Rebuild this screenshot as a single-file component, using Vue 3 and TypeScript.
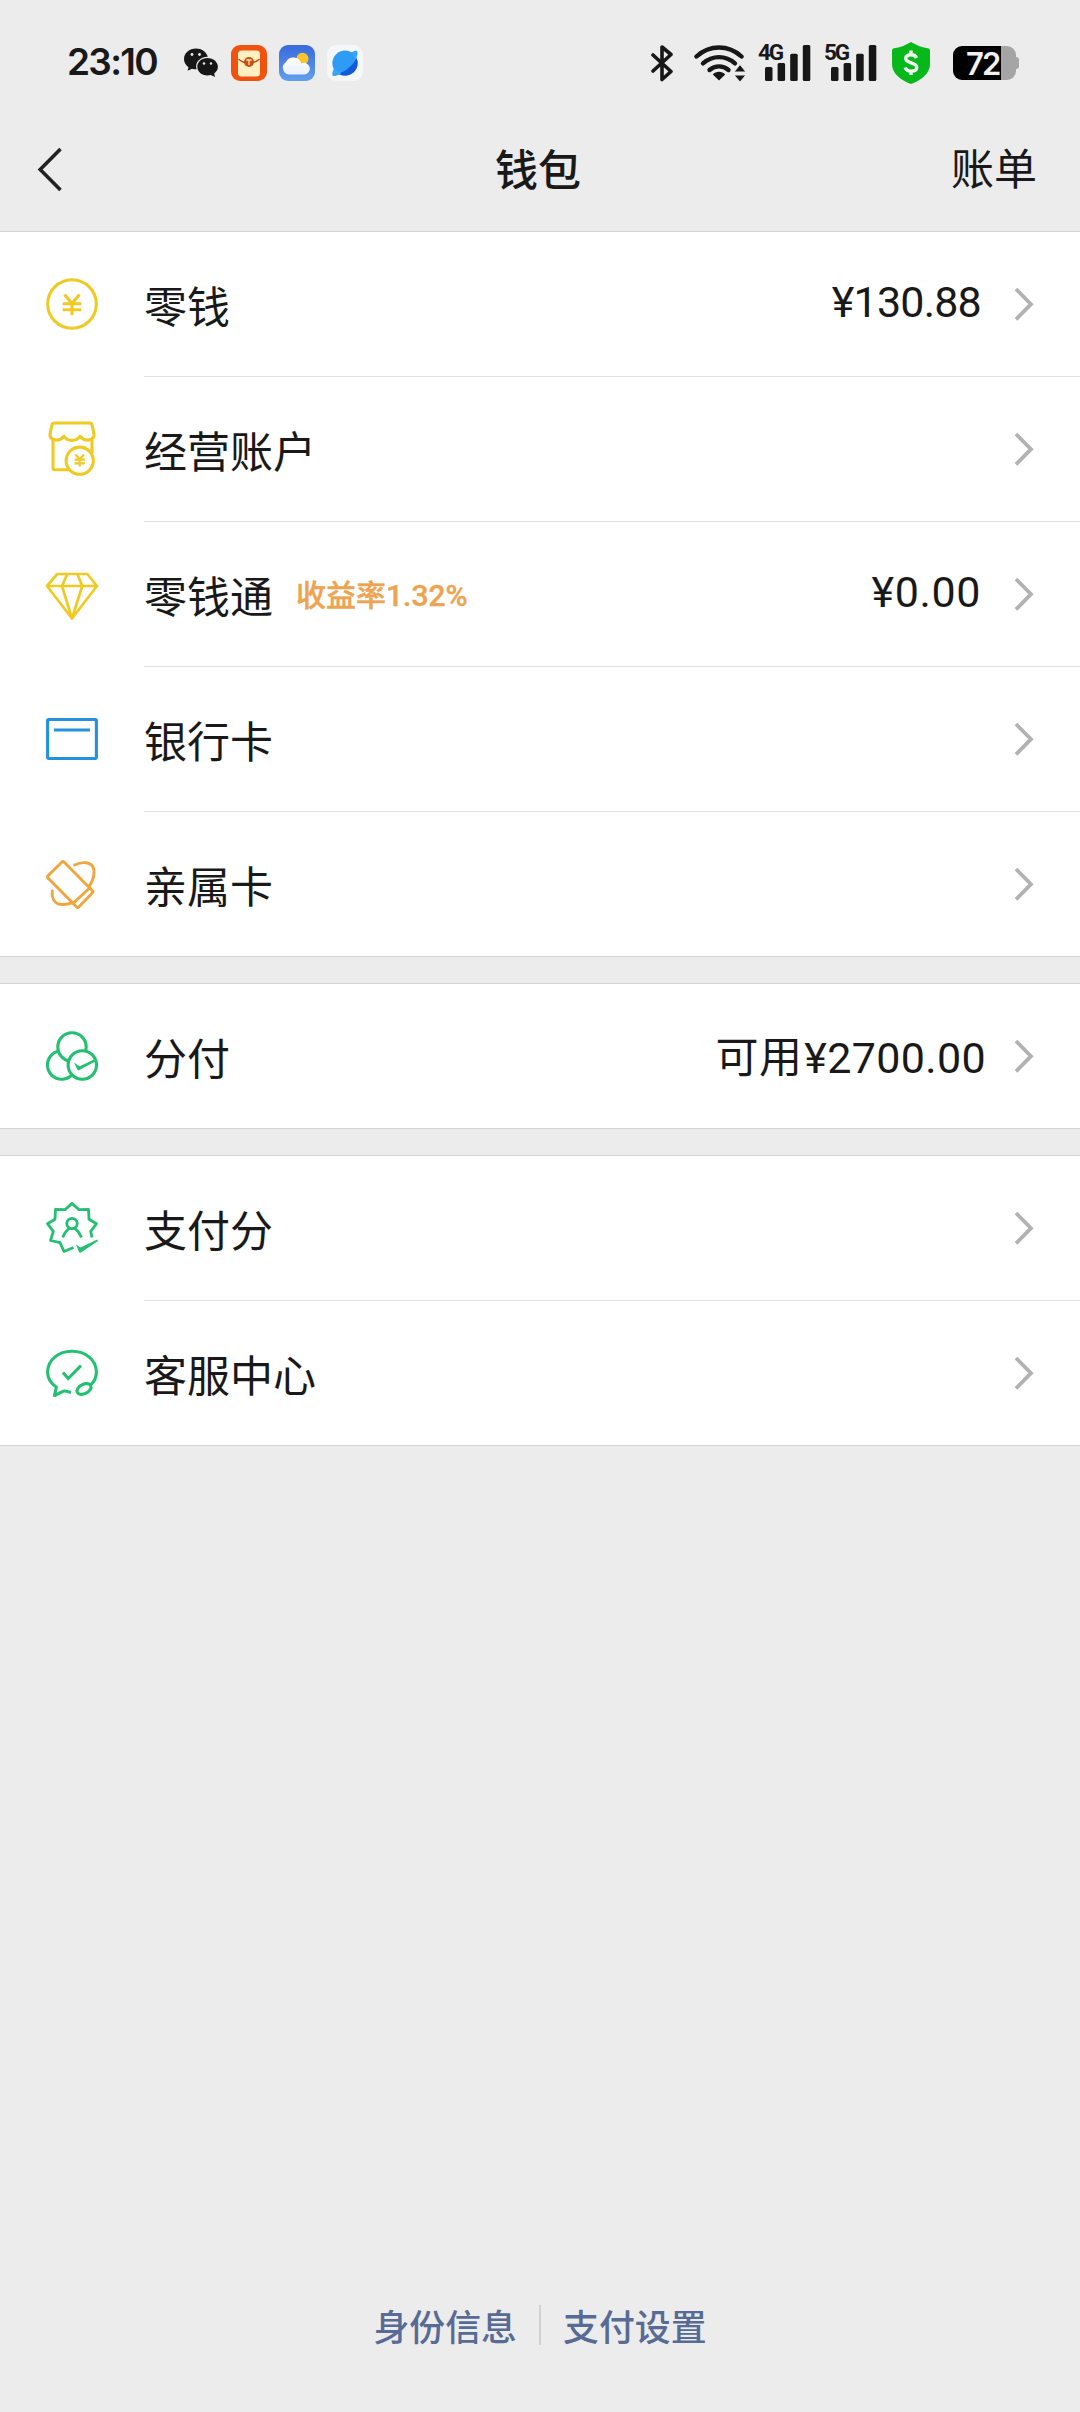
<script setup lang="ts">
type IconName = 'coin' | 'shop' | 'diamond' | 'card' | 'family' | 'circles' | 'score' | 'service'

interface Row {
  icon: IconName
  label: string
  badge?: string
  prefix?: string
  amount?: string
}

const groups: Row[][] = [
  [
    { icon: 'coin', label: '零钱', amount: '¥130.88' },
    { icon: 'shop', label: '经营账户' },
    { icon: 'diamond', label: '零钱通', badge: '收益率1.32%', amount: '¥0.00' },
    { icon: 'card', label: '银行卡' },
    { icon: 'family', label: '亲属卡' },
  ],
  [{ icon: 'circles', label: '分付', prefix: '可用', amount: '¥2700.00' }],
  [
    { icon: 'score', label: '支付分' },
    { icon: 'service', label: '客服中心' },
  ],
]

const networks: string[] = ['4G', '5G']
</script>

<template>
  <main class="page">
    <header class="status">
      <span class="clock">23:10</span>
      <div class="apps">
        <svg class="wechat" width="34" height="30" viewBox="0 0 34 30">
          <path fill="#171717" d="M12 .5C5.400.5 0 5 0 11c0 3.400 1.700 6.200 4.500 8.200L3.600 22.800 8 20.700c1.300.4 2.600.6 4 .6h.6C10.500 14.500 16 8.800 23.800 8.800 22.500 3.800 17.600.5 12 .5Z" />
          <path fill="#171717" d="M23.400 10C17.500 10 13.300 14 13.300 18.800s4.200 8.700 10.100 8.700c1.200 0 2.300-.2 3.400-.5l4.200 2-.8-3.500c2.300-1.600 3.700-3.900 3.700-6.700C33.900 14 29.300 10 23.400 10Z" />
          <g fill="#ececec"><circle cx="8" cy="6.500" r="1.400" /><circle cx="15.500" cy="6.500" r="1.400" /><circle cx="20" cy="15.500" r="1.200" /><circle cx="27" cy="15.500" r="1.200" /></g>
        </svg>
        <svg width="36" height="36" viewBox="0 0 36 36">
          <rect width="36" height="36" rx="9" fill="#f05310" />
          <rect x="7" y="5.500" width="22" height="26" rx="3.500" fill="#fff0c4" />
          <path d="M7.500 14c3 3 6.500 4 10.500 4s7.500-1 10.500-4" fill="none" stroke="#b8470e" stroke-width="1.200" />
          <circle cx="18" cy="17" r="5" fill="#c9500f" />
          <path d="M15.500 15h5M18 15v5" stroke="#ffe6ad" stroke-width="1.300" />
        </svg>
        <svg width="36" height="36" viewBox="0 0 36 36">
          <defs>
            <linearGradient id="sky" x1="0" y1="0" x2="0" y2="1"><stop offset="0" stop-color="#3869dc" /><stop offset="1" stop-color="#609fee" /></linearGradient>
            <linearGradient id="cloud" x1="0" y1="0" x2="0" y2="1"><stop offset="0" stop-color="#fff" /><stop offset="1" stop-color="#e8f0fd" /></linearGradient>
          </defs>
          <rect width="36" height="36" rx="9" fill="url(#sky)" />
          <circle cx="23.500" cy="13.800" r="6" fill="#fcc52c" />
          <path fill="url(#cloud)" d="M11.500 29.500A6.800 6.800 0 0 1 6.800 17.200 8.300 8.300 0 0 1 22.300 18.600 5.800 5.800 0 1 1 25 29.500Z" />
        </svg>
        <svg width="36" height="36" viewBox="0 0 36 36">
          <rect width="36" height="36" rx="9" fill="#f5f6f7" />
          <circle cx="18" cy="18.200" r="12.600" fill="#2e9cf5" />
          <path fill="#1559db" d="M29.500 13C25.500 21 18 27.500 10.500 28.300 18 33.500 30 29.500 30.600 18.500Q30.600 15.500 29.500 13Z" />
          <path fill="#3aa5f7" d="M24.500 7.500C27 5.500 30 5 30.500 7c.4 2-.5 5-2 7.500ZM7 23.500C5 27.500 4.700 30.500 6.500 31c2 .5 5-1 8-3Z" />
        </svg>
      </div>
      <div class="system">
        <svg class="bt" width="22" height="38" viewBox="0 0 22 38">
          <path d="M2 11 20 27.500 11 35.500V3L20 10.500 2 27" fill="none" stroke="#171717" stroke-width="3.600" stroke-linejoin="round" stroke-linecap="round" />
        </svg>
        <svg class="wifi" width="52" height="38" viewBox="0 0 52 38">
          <g fill="none" stroke="#171717" stroke-width="4.400" stroke-linecap="round">
            <path d="M2.500 12.500C15.500.5 34.500.5 47.500 12.500" /><path d="M9 19.300c9.500-8.200 22.500-8.200 32 0" /><path d="M15.500 26c5.700-4.800 13.300-4.800 19 0" />
          </g>
          <path fill="#171717" d="M25 36.500 18.800 30.500C22 26.800 28 26.800 31.200 30.500Z" />
          <path fill="#171717" stroke="#ececec" stroke-width="1" d="M46 20.500 52 28H40ZM46 38 52 31H40Z" />
        </svg>
        <div v-for="net in networks" :key="net" class="signal">
          <span class="net">{{ net }}</span>
          <svg width="46" height="36" viewBox="0 0 46 36">
            <g fill="#171717"><rect y="22" width="7.500" height="14" rx="1.500" /><rect x="12.600" y="18" width="7.500" height="18" rx="1.500" /><rect x="25.200" y="8.700" width="7.500" height="27.300" rx="1.500" /><rect x="37.800" width="7.500" height="36" rx="1.500" /></g>
          </svg>
        </div>
        <svg class="shield" width="38" height="42" viewBox="0 0 38 42">
          <path fill="#07b81b" d="M19 0c5.500 3.500 11.500 5.500 17 6.200q2 .3 2 2.300V22c0 9.500-8.500 16-19 20C8.500 38 0 31.500 0 22V8.500Q0 6.500 2 6.200C7.500 5.500 13.500 3.500 19 0Z" />
          <path d="M24.500 16C23.500 13.500 21.500 12.800 19 12.800c-3 0-5.300 1.200-5.300 3.800 0 5.200 11 3.200 11 8.600 0 2.600-2.500 3.900-5.700 3.900-2.800 0-5-1.100-5.800-3.600M19 8.500v5M19 28.500v4.500" fill="none" stroke="#f4fff4" stroke-width="3.400" />
        </svg>
        <div class="battery"><span class="level">72</span></div>
      </div>
    </header>

    <nav class="nav">
      <svg class="back" width="28" height="46" viewBox="0 0 28 46"><path d="M24.500 2 4.200 22.500 24.500 43" fill="none" stroke="#222" stroke-width="3.600" /></svg>
      <h1 class="title">钱包</h1>
      <span class="bill">账单</span>
    </nav>

    <section v-for="(group, g) in groups" :key="g" class="group">
      <div v-for="row in group" :key="row.label" class="row">
        <svg class="icon" :class="row.icon" width="60" height="60" viewBox="0 0 60 60">
          <template v-if="row.icon === 'coin'">
            <circle cx="30" cy="30" r="24.300" />
            <path d="M22.500 20.500 30 29.500 37.500 20.500M20.700 29.700h18.600M20.700 35.700h18.600M30 29.500V41" />
          </template>
          <template v-else-if="row.icon === 'shop'">
            <path d="M11 20.500V49q0 1.700 1.700 1.700H30M50 20.500V34" />
            <path stroke-linejoin="round" d="M12.500 4h35q2 0 2.600 2L52 15C52.500 21.500 43 23.500 38 17.200 34.500 22.800 25.500 22.800 22 17.200 17 23.500 7.500 21.500 8 15L9.900 6q.6-2 2.600-2Z" />
            <circle cx="37.700" cy="41.700" r="13.600" fill="#fff" />
            <path stroke-width="2.200" d="M33.500 35.500 37.700 40.500 41.900 35.500M32.500 40.700h10.400M32.500 44.300h10.400M37.700 40.500v7" />
          </template>
          <path v-else-if="row.icon === 'diamond'" stroke-width="2.700" stroke-linejoin="round" d="M15.300 10H45.300L55 22 30 54.500 5 22ZM5 22H55M25.300 10 20 22 30 54.500 40.300 22 35.300 10" />
          <template v-else-if="row.icon === 'card'">
            <rect x="5.600" y="10.500" width="48.800" height="39" rx="1.200" />
            <path d="M12 21H48" stroke-width="2.900" />
          </template>
          <template v-else-if="row.icon === 'family'">
            <path stroke-width="2.900" d="M20 8q1-1 2 0L50.500 36.700q1 1 0 2L36.700 53q-1 1-2 0L6 24q-1-1.200 0-2.200ZM47 34.500 31.500 49" />
            <path stroke-width="2.900" stroke-linecap="round" d="M32.500 11C41 7 49 8 51.500 14c1.800 5.500-.2 12-4.500 19M10.300 37C9.500 43 11.500 49 18 50.300c4 .7 9-.3 14-2" />
          </template>
          <template v-else-if="row.icon === 'circles'">
            <circle cx="19.700" cy="39" r="14.200" />
            <circle cx="30" cy="21" r="14.200" fill="#fff" />
            <circle cx="40.300" cy="39" r="14.200" fill="#fff" />
            <path class="solid" d="M32 36.500 36.500 39.800Q37.300 40.400 38.300 39.900L52 33.600 53 35.700 37.200 44Q36 44.700 35.200 43.300Z" />
          </template>
          <template v-else-if="row.icon === 'score'">
            <path stroke-width="2.800" stroke-linejoin="round" d="M50 39.500 48.700 33.300 54.500 25.700 47 21.200 46.500 11.400 37 11.700 30 5.400 23 11.700 13.500 11.400 13 21.200 5.500 25.700 11.300 33.300 8.500 42.500 18 44.700 22 53.500 31.500 49.500" />
            <circle cx="30" cy="25.500" r="5.200" stroke-width="2.800" />
            <path stroke-width="2.800" d="M20.800 39.500C22 35.500 24.500 32.500 27.500 30M39.400 39.500C38 35.500 35.500 32.500 32.500 30" />
            <path class="solid" d="M34 46.500 38.500 49.500 55.300 41.500 56 43 39 54.500Q37.800 55.200 37 54Z" />
          </template>
          <template v-else>
            <path stroke-linejoin="round" d="M29 49.500C26 48.700 23.500 47.500 21.500 48.200L12.500 52.500 14.300 44C9 40.500 5.600 35 5.600 29 5.600 17 16.500 8.300 30 8.300S54.400 17 54.400 29c0 5-2 9.500-5.500 12.700" />
            <ellipse cx="42" cy="46" rx="7.500" ry="4.700" transform="rotate(-27 42 46)" />
            <path d="M20.900 29.500 26.200 35.500 39 22.700" />
          </template>
        </svg>
        <div class="body">
          <span class="label">{{ row.label }}</span>
          <span v-if="row.badge" class="badge">{{ row.badge }}</span>
          <span v-if="row.amount" class="value" :class="[row.icon + '-value']"><span v-if="row.prefix" class="prefix">{{ row.prefix }}</span>{{ row.amount }}</span>
          <svg class="chevron" width="20" height="34" viewBox="0 0 20 34"><path d="M2 2 17 17.200 2 32.400" fill="none" stroke="#b2b2b2" stroke-width="3.800" /></svg>
        </div>
      </div>
    </section>

    <footer class="footer">
      <span>身份信息</span>
      <i class="bar"></i>
      <span>支付设置</span>
    </footer>
  </main>
</template>

<style>
body {
  background: #ececec;
}
</style>

<style scoped>
.page {
  display: flex;
  flex-direction: column;
  width: 1080px;
  height: 2412px;
  overflow: hidden;
  background: #ececec;
  color: #191919;
  font-family: 'Noto Sans CJK SC', sans-serif;
}
.status {
  display: flex;
  align-items: center;
  height: 125px;
  flex: none;
}
.clock {
  width: 91px;
  margin-left: 67px;
  padding-bottom: 2px;
  font: 600 37px/44px Inter, sans-serif;
  letter-spacing: -1.700px;
  white-space: nowrap;
}
.apps {
  display: flex;
  align-items: center;
  gap: 12px;
  margin-left: 26px;
}
.wechat {
  margin-right: 1px;
}
.system {
  display: flex;
  align-items: center;
  margin-left: auto;
  margin-right: 64px;
}
.wifi {
  margin-left: 21px;
}
.signal {
  position: relative;
  margin-left: 19px;
  height: 36px;
}
.signal + .signal {
  margin-left: 20px;
}
.signal svg {
  display: block;
}
.net {
  position: absolute;
  left: -7px;
  top: -4px;
  font: 700 22.500px/22px Roboto, sans-serif;
  letter-spacing: -2.200px;
}
.shield {
  margin-left: 15px;
}
.battery {
  position: relative;
  width: 63px;
  height: 34px;
  margin-left: 23px;
  border-radius: 9px;
  background: linear-gradient(90deg, #000 48px, #a5a5a5 48px);
}
.battery::after {
  content: '';
  position: absolute;
  left: 63px;
  top: 11px;
  width: 3px;
  height: 12px;
  border-radius: 0 3px 3px 0;
  background: #a5a5a5;
}
.level {
  display: block;
  padding-left: 13px;
  font: 600 31px/35px Inter, sans-serif;
  letter-spacing: -1.800px;
  color: #f0f0f0;
}
.nav {
  display: flex;
  align-items: center;
  justify-content: space-between;
  height: 106px;
  box-sizing: border-box;
  flex: none;
  padding: 0 43px 19px 36px;
}
.back {
  margin: 3px 61px 0 0;
}
.title,
.bill {
  margin: 0 0 3px;
  font-size: 43px;
  line-height: 60px;
  font-weight: 500;
}
.bill {
  margin-bottom: 6px;
  font-weight: 400;
}
.group {
  flex: none;
  border-top: 1px solid #d4d4d4;
  background: #fff;
}
.group + .group {
  margin-top: 26px;
}
.row {
  display: flex;
  height: 145px;
}
.icon {
  margin: 42px 42px 0;
  flex: none;
  fill: none;
  stroke: currentColor;
  stroke-width: 3.100;
}
.solid {
  fill: currentColor;
  stroke: none;
}
.coin,
.shop,
.diamond {
  color: #f0ca24;
}
.card {
  color: #2391de;
}
.family {
  color: #f0a53e;
}
.circles,
.score,
.service {
  color: #22c070;
}
.body {
  display: flex;
  flex: 1;
  align-items: center;
  border-bottom: 1px solid #e2e2e2;
  padding-right: 46px;
}
.row:last-child {
  border-bottom: 1px solid #d4d4d4;
  box-sizing: border-box;
}
.row:last-child .body {
  border-bottom: 0;
}
.label {
  font-size: 43px;
  line-height: 60px;
}
.badge {
  margin: 3px 0 0 23px;
  font: 500 30px/44px Roboto, 'Noto Sans CJK SC', sans-serif;
  -webkit-text-stroke: 0.400px #eda34f;
  color: #eda34f;
}
.value {
  margin-left: auto;
  padding-bottom: 4px;
  font: 400 43px/60px Roboto, 'Noto Sans CJK SC', sans-serif;
}
.coin-value {
  letter-spacing: -0.800px;
}
.diamond-value {
  letter-spacing: 0.600px;
}
.circles-value {
  padding: 4px 0 0;
  letter-spacing: 0.350px;
}
.chevron {
  margin-left: auto;
}
.value + .chevron {
  margin-left: 33px;
}
.circles-value + .chevron {
  margin-left: 28px;
}
.prefix {
  margin-right: 2px;
}
.footer {
  display: flex;
  justify-content: center;
  align-items: center;
  margin-top: auto;
  margin-bottom: 61px;
  height: 52px;
  font-size: 35.900px;
  font-weight: 500;
  line-height: 52px;
  color: #576b95;
}
.bar {
  width: 2px;
  height: 40px;
  margin: 0 22px;
  background: #d2d2d2;
}
</style>
